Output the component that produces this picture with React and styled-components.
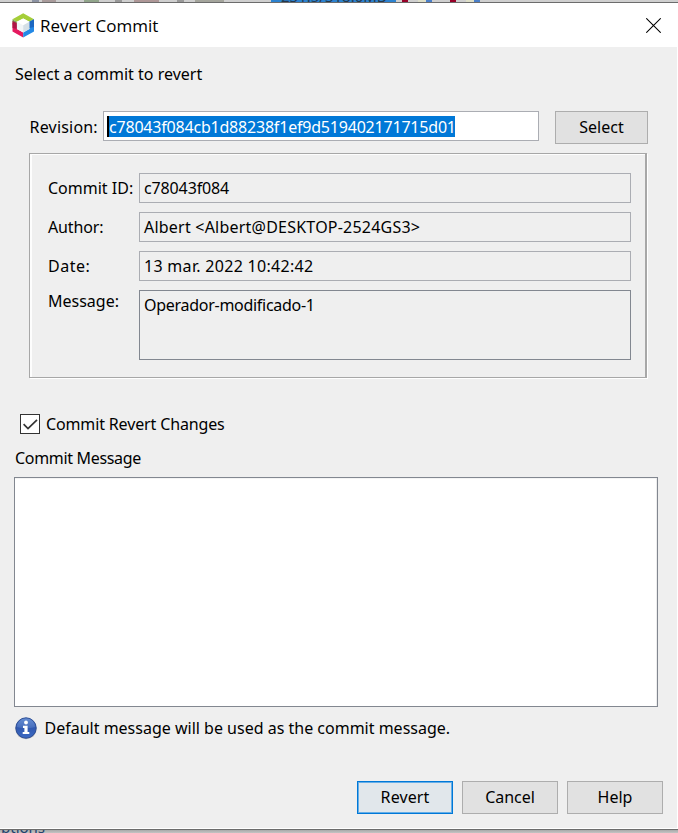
import React from 'react';
import styled, { createGlobalStyle, css } from 'styled-components';

const GlobalStyle = createGlobalStyle`
  * { box-sizing: border-box; }
  html, body { margin: 0; padding: 0; overflow: hidden; }
  body {
    font: 16px/22px "Noto Sans", "Open Sans", sans-serif;
    color: #000;
    background: #efefef;
  }
`;

const Screen = styled.div`
  width: 678px;
  height: 833px;
  display: flex;
  flex-direction: column;
  overflow: hidden;
`;

const BackdropTop = styled.div`
  flex: none;
  height: 2px;
  display: flex;
  overflow: hidden;
  background: #cfcfcf;
`;

const Chip = styled.span`
  flex: none;
  width: ${(p) => p.$w}px;
  margin-left: ${(p) => p.$gap || 0}px;
  background: ${(p) => p.$color};
`;

const MemoryMeter = styled.span`
  flex: none;
  width: 125px;
  height: 2px;
  margin-left: 47px;
  padding-left: 10px;
  overflow: hidden;
  background: #2c82cf;
  color: #24384c;
  font-size: 15px;
  line-height: 20px;
  white-space: nowrap;

  span {
    display: block;
    margin-top: -14px;
  }
`;

const BackdropBottom = styled.div`
  flex: none;
  height: 3px;
  padding-left: 1px;
  overflow: hidden;
  background: linear-gradient(#a9a9a9, #c4c4c4);
  color: #24426c;
  font-size: 15px;
  line-height: 20px;

  span {
    display: block;
    margin-top: -13px;
  }
`;

const Dialog = styled.main`
  flex: 1;
  min-height: 0;
  display: flex;
  flex-direction: column;
  border-top: 1px solid #6c6c6c;
  border-bottom: 1px solid #6c6c6c;
  background: #efefef;
`;

const TitleBar = styled.header`
  flex: none;
  height: 44px;
  display: flex;
  align-items: center;
  padding: 0 17px 0 12px;
  background: #fff;
`;

const Title = styled.h1`
  flex: 1;
  margin: 1px 0 0 5px;
  font: 400 17px/24px "Open Sans", "Noto Sans", sans-serif;
`;

const CloseButton = styled.button`
  display: flex;
  padding: 0;
  border: 0;
  background: none;
`;

const Content = styled.div`
  flex: 1;
  min-height: 0;
  display: flex;
  flex-direction: column;
  align-items: flex-start;
  padding: 16px 14px 0;
  border-right: 1px solid #fff;
  border-bottom: 1px solid #fff;
`;

const Text = styled.span`
  white-space: nowrap;
  letter-spacing: ${(p) => p.$track || 0}px;
`;

const Prompt = styled(Text)`
  margin-left: 1px;
`;

const Caption = styled(Text)`
  margin: 12px 0 0 1px;
`;

const RevisionRow = styled.div`
  display: flex;
  align-items: flex-start;
  margin: 26px 0 0 15px;
`;

const RevisionLabel = styled.label`
  width: 74px;
  margin-top: 5px;
  padding-left: 0.5px;
  letter-spacing: 0.2px;
`;

const RevisionInput = styled.div`
  width: 436px;
  height: 30px;
  padding: 4px 0 0 3px;
  border: 1px solid #abadb3;
  background: #fff;
`;

const Selection = styled.span`
  display: block;
  width: 348px;
  height: 21px;
  border-left: 2px solid #000;
  background: #0078d7;
  color: #fff;
  line-height: 22px;
  letter-spacing: -0.2px;
  white-space: nowrap;
`;

const Button = styled.button`
  width: ${(p) => p.$w || 96}px;
  height: 33px;
  margin: 0;
  padding: 0 0 1px;
  border: 1px solid #adadad;
  background: #e1e1e1;
  color: #000;
  font: inherit;
  letter-spacing: ${(p) => p.$track || 0}px;
  ${(p) =>
    p.$primary &&
    css`
      border-color: #0078d7;
      background: #e1e7eb;
      box-shadow: inset 0 0 0 1px #66aee7;
    `}
`;

const SelectButton = styled(Button)`
  margin-left: 16px;
`;

const EtchedPanel = styled.section`
  width: 618px;
  height: 225px;
  display: grid;
  grid-template-columns: 91px 492px;
  grid-template-rows: 30px 30px 30px 70px;
  row-gap: 9px;
  margin: 9px 0 0 15px;
  padding: 19px 0 0 18px;
  border: solid #a7a7a7;
  border-width: 1px 2px 1px 1px;
  box-shadow: inset 2px 1px 0 #fdfdfd, 1px 1px 0 #fff;
`;

const FieldLabel = styled.span`
  padding-top: ${(p) => (p.$top ? 0 : 4)}px;
  white-space: nowrap;
  letter-spacing: ${(p) => p.$track || 0}px;
`;

const Field = styled.div`
  padding: 3px 0 0 4px;
  border: 1px solid ${(p) => (p.$area ? '#828790' : '#abadb3')};
  white-space: nowrap;
  letter-spacing: ${(p) => p.$track || 0}px;
`;

const CheckRow = styled.label`
  height: 22px;
  display: flex;
  align-items: center;
  gap: 6px;
  margin: 35px 0 0 6px;
`;

const CheckBox = styled.span`
  width: 20px;
  height: 20px;
  display: flex;
  border: 1px solid #333;
  background: #fff;
`;

const MessageArea = styled.div`
  flex: none;
  width: 644px;
  height: 230px;
  margin-top: 8px;
  border: 1px solid #828790;
  background: #fff;
  box-shadow: inset -1px 0 0 #ededed, inset 0 1px 0 #f4f4f4;
`;

const InfoRow = styled.div`
  display: flex;
  align-items: center;
  gap: 6.5px;
  margin-top: 9px;
`;

const Actions = styled.footer`
  align-self: flex-end;
  display: flex;
  gap: 9px;
  margin-top: 41px;
`;

const NetBeansLogo = () => (
  <svg width="23" height="25" viewBox="0 0 23 25">
    <path d="M11.2 0.3 22 6.2 17.4 8.8 11.2 5.5 4.9 8.8 0.5 6.2Z" fill="#a5ce39" />
    <path d="M0.5 6.2 4.9 8.8V12.5L0.5 11.5Z" fill="#7b9d58" />
    <path d="M0.5 10 4.9 11V16L11.2 19.5V24.6L0.5 18.4Z" fill="#e5195f" />
    <path d="M0.5 8 4.9 10V16L0.5 15Z" fill="#ad1545" />
    <path d="M22 6.2V18.4L11.2 24.6V19.5L17.4 16V8.8Z" fill="#2389e6" />
    <path d="M22 6.2V14L17.4 15V8.8Z" fill="#1b67c1" />
    <path d="M4.9 8.8 11.2 5.5 17.4 8.8 11.2 12.2Z" fill="#fff" />
    <path d="M4.9 8.8 11.2 12.2V19.5L4.9 16Z" fill="#f1f5f7" />
    <path d="M17.4 8.8 11.2 12.2V19.5L17.4 16Z" fill="#d4dfe6" />
  </svg>
);

const InfoIcon = () => (
  <svg width="24" height="24" viewBox="0 0 24 24">
    <defs>
      <linearGradient id="info-fill" x1="0" y1="0" x2="0" y2="1">
        <stop offset="0" stopColor="#5d87d0" />
        <stop offset="0.5" stopColor="#3159b0" />
        <stop offset="1" stopColor="#3d6bc4" />
      </linearGradient>
    </defs>
    <ellipse cx="12" cy="13" rx="10.6" ry="10.2" fill="#b3b6bd" />
    <circle cx="12" cy="12" r="10.2" fill="url(#info-fill)" stroke="#2c4d95" />
    <path d="M3 11a9 8.5 0 0 1 18 0Q12 13.5 3 11Z" fill="#7da0dc" opacity="0.28" />
    <circle cx="12" cy="6.5" r="1.9" fill="#fff" />
    <path d="M9 9.8h4.6v6.1H15.3V18H8.7V15.9H10.4V11.9H9Z" fill="#fff" />
  </svg>
);

export default function App() {
  return (
    <Screen>
      <GlobalStyle />
      <BackdropTop>
        <Chip $gap={32} $w={7} $color="#8c93a3" />
        <Chip $gap={3} $w={14} $color="#a99b9b" />
        <Chip $gap={28} $w={15} $color="#91a58b" />
        <Chip $gap={16} $w={7} $color="#999" />
        <Chip $gap={12} $w={25} $color="#ae9797" />
        <Chip $gap={18} $w={7} $color="#999" />
        <Chip $gap={11} $w={29} $color="#a4a59c" />
        <MemoryMeter>
          <span>231.5/318.0MB</span>
        </MemoryMeter>
        <Chip $gap={6} $w={6} $color="#960027" />
        <Chip $gap={10} $w={8} $color="#dedfc8" />
        <Chip $w={6} $color="#4a7fc9" />
        <Chip $gap={18} $w={6} $color="#960027" />
        <Chip $gap={10} $w={8} $color="#dedfc8" />
        <Chip $w={6} $color="#4a7fc9" />
      </BackdropTop>
      <Dialog>
        <TitleBar>
          <NetBeansLogo />
          <Title>Revert Commit</Title>
          <CloseButton aria-label="Close">
            <svg width="15" height="15" viewBox="0 0 15 15">
              <path d="M0.3 0.3 14.7 14.7M14.7 0.3 0.3 14.7" stroke="#000" strokeWidth="1.05" />
            </svg>
          </CloseButton>
        </TitleBar>
        <Content>
          <Prompt>Select a commit to revert</Prompt>
          <RevisionRow>
            <RevisionLabel>Revision:</RevisionLabel>
            <RevisionInput>
              <Selection>c78043f084cb1d88238f1ef9d519402171715d01</Selection>
            </RevisionInput>
            <SelectButton $w={93}>Select</SelectButton>
          </RevisionRow>
          <EtchedPanel>
            <FieldLabel>Commit ID:</FieldLabel>
            <Field $track={-0.13}>c78043f084</Field>
            <FieldLabel $track={-0.15}>Author:</FieldLabel>
            <Field $track={0.22}>Albert &lt;Albert@DESKTOP-2524GS3&gt;</Field>
            <FieldLabel $track={0.5}>Date:</FieldLabel>
            <Field $track={0.3}>13 mar. 2022 10:42:42</Field>
            <FieldLabel $top>Message:</FieldLabel>
            <Field $area $track={-0.28}>Operador-modificado-1</Field>
          </EtchedPanel>
          <CheckRow>
            <CheckBox>
              <svg width="18" height="18" viewBox="0 0 18 18">
                <path d="M2.6 9.2 7 13.5 16 4.8" fill="none" stroke="#333" strokeWidth="1.7" />
              </svg>
            </CheckBox>
            <Text $track={-0.14}>Commit Revert Changes</Text>
          </CheckRow>
          <Caption $track={-0.32}>Commit Message</Caption>
          <MessageArea />
          <InfoRow>
            <InfoIcon />
            <Text>Default message will be used as the commit message.</Text>
          </InfoRow>
          <Actions>
            <Button $primary $track={0.1}>Revert</Button>
            <Button $track={-0.05}>Cancel</Button>
            <Button>Help</Button>
          </Actions>
        </Content>
      </Dialog>
      <BackdropBottom>
        <span>ptions</span>
      </BackdropBottom>
    </Screen>
  );
}
